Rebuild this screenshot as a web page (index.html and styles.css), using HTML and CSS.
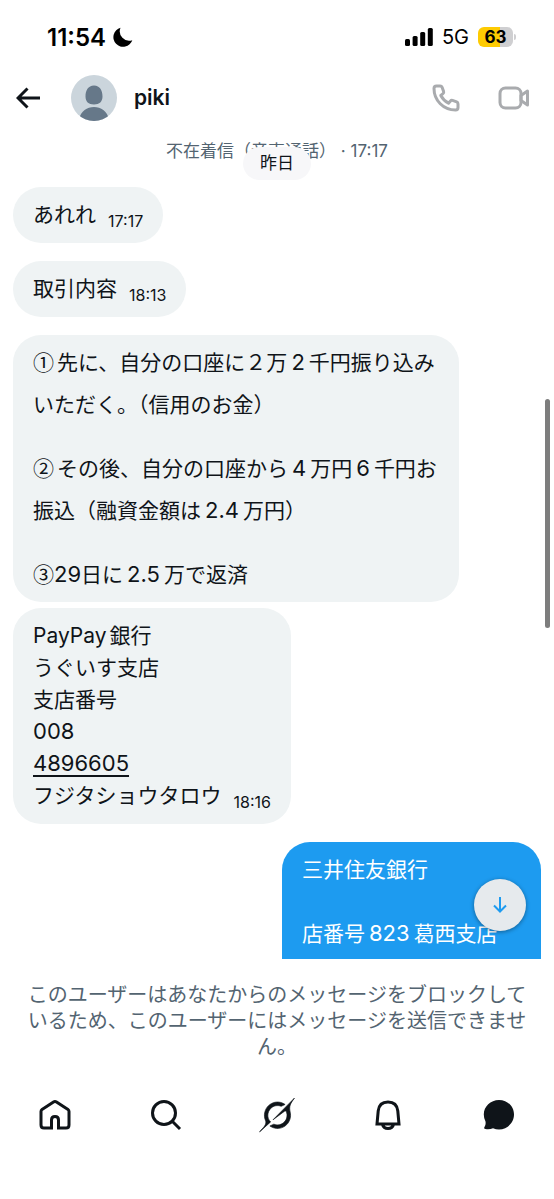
FILE: index.html
```html
<!DOCTYPE html>
<html lang="ja">
<head>
<meta charset="utf-8">
<meta name="viewport" content="width=device-width, initial-scale=1">
<title>piki</title>
<link rel="stylesheet" href="styles.css">
</head>
<body>
<div class="app">
  <div class="status">
    <div class="status-left">
      <span class="clock">11:54</span>
      <svg class="moon" viewBox="0 0 20 20" aria-hidden="true"><path d="M7.500.8A9.700 9.700 0 1 0 19.300 13.200 9.400 9.400 0 0 1 7.500.8z"/></svg>
    </div>
    <div class="status-right">
      <svg class="signal" viewBox="0 0 28 18" aria-hidden="true"><rect x="0" y="11" width="5" height="7" rx="1.500"/><rect x="7.600" y="8" width="5" height="10" rx="1.500"/><rect x="15.200" y="4" width="5" height="14" rx="1.500"/><rect x="22.800" y="0" width="5" height="18" rx="1.500"/></svg>
      <span class="network">5G</span>
      <span class="battery">63</span>
    </div>
  </div>

  <header class="header">
    <button class="icon-button" aria-label="戻る">
      <svg class="back" viewBox="0 0 24 22"><path d="M24 11H2M11.500 1.500 2 11l9.500 9.500"/></svg>
    </button>
    <svg class="avatar" viewBox="0 0 46 46" aria-hidden="true"><defs><clipPath id="disc"><circle cx="23" cy="23" r="23"/></clipPath></defs><g clip-path="url(#disc)"><rect width="46" height="46" fill="#cbd5dc"/><path d="M23 10.500c6 0 8.500 5 8.500 11 0 5-3 8-8.500 8s-8.500-3-8.500-8c0-6 2.500-11 8.500-11zM8 44c2-8 8-12 15-12s13 4 15 12v4H8z" fill="#667889"/></g></svg>
    <h1 class="name">piki</h1>
    <button class="icon-button" aria-label="音声通話">
      <svg class="phone" viewBox="0 0 28 28"><path d="M4.500 2h3.600q1.500 0 2 1.300l1.500 4.200q.4 1.200-.5 2l-2.300 2c1.800 3.400 4.300 5.900 7.700 7.700l2-2.300q.8-.9 2-.5l4.200 1.500q1.300.5 1.300 2v3.600q0 2.500-2.500 2.500C11.500 26 2 16.500 2 4.500 2 3 3 2 4.500 2z"/></svg>
    </button>
    <button class="icon-button" aria-label="ビデオ通話">
      <svg class="video" viewBox="0 0 32 24"><rect x="2" y="2" width="21" height="20" rx="5.500"/><path d="M23 9.500 29.500 5v14L23 14.500z"/></svg>
    </button>
  </header>

  <main class="chat">
    <p class="event">不在着信（音声通話） · 17:17</p>
    <div class="date">昨日</div>

    <div class="bubble spaced"><p>あれれ<time>17:17</time></p></div>
    <div class="bubble spaced"><p>取引内容<time>18:13</time></p></div>
    <div class="bubble loose">
      <p><span class="num-mark">①</span>先に、自分の口座に２万<span class="latin">2</span>千円振り込み<br>いただく。（信用のお金）</p>
      <p><span class="num-mark">②</span>その後、自分の口座から<span class="latin">4</span>万円<span class="latin">6</span>千円お<br>振込（融資金額は<span class="latin">2.4</span>万円）</p>
      <p><span class="circled">③</span><span class="digits">29</span>日に<span class="latin">2.5</span>万で返済</p>
    </div>
    <div class="bubble spaced">
      <p>PayPay<span class="after-latin">銀行</span><br>うぐいす支店<br>支店番号<br><span class="digits">008</span><br><a class="digits" href="tel:4896605">4896605</a><br>フジタショウタロウ<time>18:16</time></p>
    </div>
    <div class="bubble sent">
      <p>三井住友銀行</p>
      <p>店番号<span class="latin">823</span>葛西支店</p>
    </div>

    <div class="scrollbar"></div>
    <button class="jump" aria-label="最新のメッセージへ">
      <svg viewBox="0 0 16 16"><path d="M8 0v14M2 8.500l6 6 6-6"/></svg>
    </button>
  </main>

  <p class="notice">このユーザーはあなたからのメッセージをブロックしているため、このユーザーにはメッセージを送信できません。</p>

  <nav class="tabs">
    <a href="#home" aria-label="ホーム"><svg viewBox="0 0 36 36"><path class="line" d="M5 12.500 16.500 5q1.500-1 3 0L31 12.500q1 .7 1 2V28q0 3-3 3h-7.500v-8q0-3.500-3.500-3.500T14.500 23v8H7q-3 0-3-3V14.500q0-1.300 1-2z"/></svg></a>
    <a href="#search" aria-label="検索"><svg viewBox="0 0 36 36"><circle class="line" cx="16" cy="16" r="11.500"/><path class="line" d="m24.500 24.500 7.500 7.500"/></svg></a>
    <a href="#grok" aria-label="Grok"><svg class="bold" viewBox="-0.500 -1 34 34"><path d="M12.745 20.540l10.970-8.190c.539-.4 1.307-.244 1.564.38 1.349 3.288.746 7.241-1.938 9.955-2.683 2.714-6.417 3.310-9.830 1.954l-3.728 1.745c5.347 3.697 11.840 2.782 15.898-1.324 3.219-3.255 4.216-7.692 3.284-11.693l.008.009c-1.351-5.878.332-8.227 3.782-13.031L33 0l-4.540 4.590v-.014L12.743 20.544M10.480 22.531c-3.837-3.707-3.175-9.446.1-12.755 2.420-2.449 6.388-3.448 9.852-1.979l3.720-1.737c-.67-.49-1.530-1.017-2.515-1.387-4.455-1.854-9.789-.931-13.410 2.728-3.483 3.523-4.579 8.940-2.697 13.561 1.405 3.454-.899 5.898-3.220 8.364C1.490 30.200.666 31.074 0 32l10.478-9.466"/></svg></a>
    <a href="#notifications" aria-label="通知"><svg viewBox="0 0 36 36"><path class="line" stroke-linejoin="miter" d="M7 27 8.200 14C8.800 8 12.500 5 18 5s9.200 3 9.800 9L29 27zM12.500 27.500c.8 3 2.700 4 5.500 4s4.700-1 5.500-4"/></svg></a>
    <a href="#messages" aria-label="メッセージ"><svg viewBox="0 0 36 36"><path d="M18 3C26.500 3 33 9.500 33 17.500S26.500 32.500 18 32.500q-3 0-6-1.200-3.500 1.400-7.500.7-2-.5-1-2 1.500-2 1-5.500-1.700-3.200-1.700-7C2.800 9.500 9.500 3 18 3z"/></svg></a>
  </nav>
</div>
</body>
</html>
```

FILE: styles.css
```css
* { box-sizing: border-box; }

body {
  margin: 0;
  background: #fff;
  color: #0f1419;
  font-family: Inter, "Noto Sans CJK JP", sans-serif;
}

p, h1 { margin: 0; }

button {
  padding: 0;
  border: 0;
  background: none;
  color: inherit;
  cursor: pointer;
}

svg { display: block; }

.app {
  display: flex;
  flex-direction: column;
  height: 100vh;
}

.status {
  display: flex;
  flex: none;
  align-items: center;
  justify-content: space-between;
  height: 74px;
  padding: 0 41px 0 47px;
  color: #000;
}

.status-left, .status-right { display: flex; align-items: center; }
.status-left { gap: 7px; }
.status-right { gap: 9px; }
.clock { font-size: 24px; font-weight: 600; }
.moon { width: 20px; height: 20px; }
.signal { width: 28px; height: 18px; }
.network { font-size: 20px; }

.battery {
  position: relative;
  width: 35px;
  border-radius: 6px;
  background: linear-gradient(90deg, #fecb02 63%, #cfcfd1 63%);
  font-size: 17px;
  font-weight: 700;
  line-height: 20px;
  text-align: center;
}

.battery::after {
  content: "";
  position: absolute;
  top: 7px;
  right: -3px;
  width: 2px;
  height: 6px;
  border-radius: 0 2px 2px 0;
  background: #cfcfd1;
}

.header {
  display: flex;
  flex: none;
  align-items: center;
  height: 48px;
  padding: 0 24px 0 16px;
}

.back { width: 24px; height: 22px; }
.back path { fill: none; stroke: #0f1419; stroke-width: 3; }
.avatar { width: 46px; height: 46px; margin: 0 17px 0 31px; }
.name { flex: 1; font-size: 21px; font-weight: 600; line-height: 28px; }
.phone { width: 28px; height: 28px; margin-right: 38px; }
.video { width: 32px; height: 24px; }
.phone path, .video path, .video rect { fill: none; stroke: #a9abae; stroke-width: 3; stroke-linejoin: round; }

.chat {
  position: relative;
  display: flex;
  flex: 1;
  flex-direction: column;
  align-items: flex-start;
  min-height: 0;
  overflow: hidden;
  padding: 16px 13px 0;
}

.event {
  align-self: center;
  margin-bottom: 23px;
  color: #536471;
  font-size: 17px;
  line-height: 26px;
}

.date {
  position: absolute;
  top: 25px;
  left: 50%;
  padding: 0 17px;
  border-radius: 17px;
  background: #f7f7f9;
  font-size: 17px;
  line-height: 33px;
  transform: translateX(-50%);
}

.bubble {
  flex: none;
  max-width: 446px;
  padding: 12px 20px;
  border-radius: 28px;
  background: #eff3f4;
  font-size: 21px;
  line-height: 32px;
}

.spaced { margin-bottom: 18px; }
.bubble time { margin-left: 12px; font-size: 16px; line-height: 16px; vertical-align: -5px; }
.bubble a { color: inherit; text-decoration-thickness: 2px; text-underline-offset: 4px; }
.digits { font-size: 22px; line-height: 22px; }
.latin { margin: 0 4px; font-size: 22px; line-height: 22px; }
.after-latin { margin-left: 3px; }
.circled, .num-mark { font-family: "Noto Sans CJK JP", sans-serif; line-height: 22px; }
.num-mark { margin-right: 3px; }

.loose {
  display: flex;
  flex-direction: column;
  gap: 22px;
  width: 100%;
  margin-bottom: 6px;
  padding: 7px 20px 6px;
  line-height: 42px;
  white-space: nowrap;
}

.sent {
  display: flex;
  flex-direction: column;
  align-self: flex-end;
  gap: 32px;
  width: 259px;
  padding-bottom: 40px;
  background: #1d9bf0;
  color: #fff;
}

.scrollbar {
  position: absolute;
  top: 277px;
  right: 4px;
  width: 5px;
  height: 229px;
  border-radius: 3px;
  background: #7d7d7d;
}

.jump {
  position: absolute;
  right: 28px;
  bottom: 28px;
  display: grid;
  place-items: center;
  width: 52px;
  height: 52px;
  border-radius: 50%;
  background: #e6eaed;
  box-shadow: 0 1px 4px #0006;
}

.jump svg { width: 16px; height: 16px; }
.jump path { fill: none; stroke: #1d9bf0; stroke-width: 2; }

.notice {
  flex: none;
  padding: 23px 24px 31px;
  color: #536471;
  font-size: 20px;
  line-height: 26px;
  text-align: center;
}

.tabs {
  display: grid;
  flex: none;
  grid-template-columns: repeat(5, 1fr);
  height: 108px;
  padding-top: 6px;
}

.tabs a { display: flex; justify-content: center; }
.tabs svg { width: 36px; height: 36px; fill: #0f1419; }
.tabs .line { fill: none; stroke: #0f1419; stroke-width: 3; }
.tabs .bold { stroke: #0f1419; stroke-width: 0.6; }
```
